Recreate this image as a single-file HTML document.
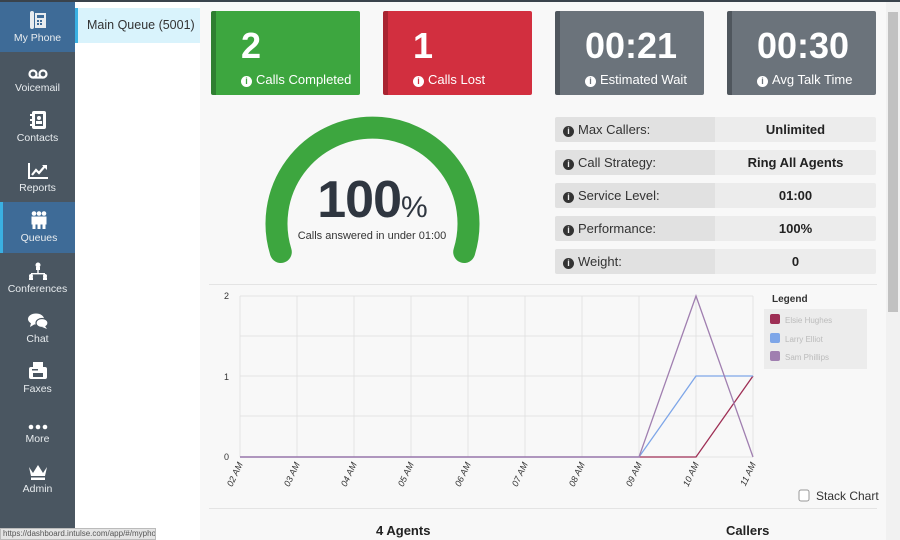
<!DOCTYPE html>
<html><head><style>
*{margin:0;padding:0;box-sizing:border-box}
body{width:900px;height:540px;overflow:hidden;font-family:"Liberation Sans",sans-serif;background:#f8f8f8;position:relative}
.sb{position:absolute;left:0;top:0;width:75px;height:540px;background:#4a5661;border-top:2px solid #3a434c}
.it{position:absolute;left:0;width:75px;height:50px;color:#e8ecef;font-size:10.5px;text-align:center}
.it .ic{height:30px;display:flex;align-items:flex-end;justify-content:center;padding-bottom:3px}
.act{background:#3e6b97}
.ql{position:absolute;left:75px;top:2px;width:125px;height:538px;background:#fff}
.qi{position:absolute;left:0;top:6px;width:125px;height:35px;background:#d9f3fc;border-left:3px solid #3ab0e2;font-size:12.5px;color:#333;padding:10px 0 0 9px;white-space:nowrap}
.card{position:absolute;top:11px;width:149px;height:84px;color:#fff;border-radius:2px}
.card b{position:absolute;left:25px;top:14px;font-size:36px}
.card span{position:absolute;left:25px;top:61px;font-size:13px}
.card i{font-style:normal;display:inline-block;width:11px;height:11px;border-radius:50%;background:#fff;color:inherit;font-size:9px;text-align:center;line-height:11px;font-weight:bold;margin-right:4px;vertical-align:0}
.row{position:absolute;left:555px;width:321px;height:25px;font-size:13px;border-radius:2px;overflow:hidden}
.row .l{position:absolute;left:0;top:0;width:160px;height:25px;background:#e1e1e1;padding:5px 0 0 8px;color:#333}
.row .v{position:absolute;left:160px;top:0;width:161px;height:25px;background:#ececec;text-align:center;padding-top:5px;font-weight:bold;color:#222}
.row i{font-style:normal;display:inline-block;width:11px;height:11px;border-radius:50%;background:#333;color:#eee;font-size:9px;text-align:center;line-height:11px;font-weight:bold;margin-right:4px}
</style></head><body>
<div class="sb">
<div class="it act" style="top:0;height:50px"><div class="ic"><svg width="16" height="18" viewBox="0 0 16 18"><rect x="0" y="0" width="4" height="18" rx="2" fill="#e8ecef"/><rect x="5" y="2" width="11" height="15" fill="#e8ecef"/><g fill="#3e6b97"><rect x="7" y="4" width="7" height="3"/><rect x="7" y="9" width="2" height="2"/><rect x="10" y="9" width="2" height="2"/><rect x="7" y="12" width="2" height="2"/><rect x="10" y="12" width="2" height="2"/></g></svg></div>My Phone</div>
<div class="it" style="top:50px"><div class="ic"><svg width="20" height="10"><circle cx="5" cy="5" r="3.5" fill="none" stroke="#fff" stroke-width="2.2"/><circle cx="15" cy="5" r="3.5" fill="none" stroke="#fff" stroke-width="2.2"/><line x1="5" y1="8.5" x2="15" y2="8.5" stroke="#fff" stroke-width="2.2"/></svg></div>Voicemail</div>
<div class="it" style="top:100px"><div class="ic"><svg width="16" height="18"><rect x="2" y="0" width="14" height="18" rx="2" fill="#fff"/><rect x="5" y="3" width="8" height="12" fill="#4a5661"/><circle cx="9" cy="7" r="2" fill="#fff"/><rect x="6" y="10" width="6" height="3" fill="#fff"/><g fill="#fff"><rect x="0" y="3" width="3" height="2"/><rect x="0" y="8" width="3" height="2"/><rect x="0" y="13" width="3" height="2"/></g></svg></div>Contacts</div>
<div class="it" style="top:150px"><div class="ic"><svg width="20" height="16"><path d="M1 0V15H20" fill="none" stroke="#fff" stroke-width="2"/><path d="M4 12L8 7L11 10L17 3" fill="none" stroke="#fff" stroke-width="2.2"/><path d="M14 2H19V7Z" fill="#fff"/></svg></div>Reports</div>
<div class="it act" style="top:200px;height:51px;border-left:3px solid #3ab0e2"><div class="ic"><svg width="18" height="18"><g fill="#fff"><circle cx="4" cy="2.5" r="2.3"/><circle cx="9" cy="2.5" r="2.3"/><circle cx="14" cy="2.5" r="2.3"/><rect x="1.5" y="5.5" width="5" height="8"/><rect x="6.5" y="5.5" width="5" height="8"/><rect x="11.5" y="5.5" width="5" height="8"/><rect x="2.5" y="13" width="3" height="5"/><rect x="7.5" y="13" width="3" height="5"/><rect x="12.5" y="13" width="3" height="5"/></g></svg></div>Queues</div>
<div class="it" style="top:251px"><div class="ic"><svg width="20" height="18"><g fill="#fff"><circle cx="10" cy="3" r="2.5"/><rect x="8" y="5" width="4" height="3"/><rect x="9.3" y="8" width="1.4" height="4"/><rect x="3" y="11" width="14" height="1.4"/><circle cx="3" cy="14" r="2"/><circle cx="17" cy="14" r="2"/><rect x="1" y="15.5" width="4" height="2.5"/><rect x="15" y="15.5" width="4" height="2.5"/></g></svg></div>Conferences</div>
<div class="it" style="top:301px"><div class="ic"><svg width="20" height="17"><ellipse cx="8" cy="6" rx="8" ry="5.5" fill="#fff"/><path d="M3 10L2 14L7 11Z" fill="#fff"/><ellipse cx="14" cy="10" rx="6" ry="4.5" fill="#fff" stroke="#4a5661" stroke-width="1.2"/><path d="M17 13L19 16L14 14Z" fill="#fff"/></svg></div>Chat</div>
<div class="it" style="top:351px"><div class="ic"><svg width="20" height="18"><rect x="5" y="0" width="10" height="5" fill="#fff"/><rect x="1" y="5" width="18" height="12" rx="2" fill="#fff"/><rect x="5" y="11" width="10" height="4" fill="#4a5661"/><rect x="4" y="7" width="6" height="1.5" fill="#4a5661"/></svg></div>Faxes</div>
<div class="it" style="top:401px"><div class="ic"><svg width="20" height="6"><circle cx="3" cy="3" r="2.3" fill="#fff"/><circle cx="10" cy="3" r="2.3" fill="#fff"/><circle cx="17" cy="3" r="2.3" fill="#fff"/></svg></div>More</div>
<div class="it" style="top:451px"><div class="ic"><svg width="20" height="16"><path d="M1 3L5 9L10 1L15 9L19 3L17 12H3Z" fill="#fff"/><rect x="3" y="13.5" width="14" height="2.5" fill="#fff"/></svg></div>Admin</div>
</div>
<div class="ql"><div class="qi">Main Queue (5001)</div></div>
<div style="position:absolute;left:0;top:528px;width:156px;height:12px;background:#e4e4e4;border:1px solid #bbb;font-size:8px;color:#555;padding-left:2px;line-height:10px;white-space:nowrap;overflow:hidden">https://dashboard.intulse.com/app/#/myphone</div>
<div style="position:absolute;left:0;top:0;width:900px;height:2px;background:#3a434c"></div>

<div class="card" style="left:211px;background:#3da63f;border-left:5px solid #2f7f31"><b>2</b><span><i style="color:#3da63f">i</i>Calls Completed</span></div>
<div class="card" style="left:383px;background:#d22f3f;border-left:5px solid #a92431"><b>1</b><span><i style="color:#d22f3f">i</i>Calls Lost</span></div>
<div class="card" style="left:555px;background:#6b737b;border-left:5px solid #4f565d"><b>00:21</b><span><i style="color:#6b737b">i</i>Estimated Wait</span></div>
<div class="card" style="left:727px;background:#6b737b;border-left:5px solid #4f565d"><b>00:30</b><span><i style="color:#6b737b">i</i>Avg Talk Time</span></div>

<svg style="position:absolute;left:260px;top:105px" width="225" height="165"><path d="M20.8 147 A96 96 0 1 1 204.2 147" fill="none" stroke="#3da63f" stroke-width="22" stroke-linecap="round"/></svg>
<div style="position:absolute;left:280px;top:170px;width:185px;text-align:center;color:#2f3640"><span style="font-size:52px;font-weight:bold;letter-spacing:-1px">100</span><span style="font-size:30px">%</span></div>
<div style="position:absolute;left:272px;top:230px;width:200px;text-align:center;font-size:11px;color:#333">Calls answered in under 01:00</div>

<div class="row" style="top:117px"><div class="l"><i>i</i>Max Callers:</div><div class="v">Unlimited</div></div>
<div class="row" style="top:150px"><div class="l"><i>i</i>Call Strategy:</div><div class="v">Ring All Agents</div></div>
<div class="row" style="top:183px"><div class="l"><i>i</i>Service Level:</div><div class="v">01:00</div></div>
<div class="row" style="top:216px"><div class="l"><i>i</i>Performance:</div><div class="v">100%</div></div>
<div class="row" style="top:249px"><div class="l"><i>i</i>Weight:</div><div class="v">0</div></div>

<div style="position:absolute;left:209px;top:284px;width:668px;height:1px;background:#e4e4e4"></div>
<div style="position:absolute;left:209px;top:508px;width:668px;height:1px;background:#e4e4e4"></div>
<svg style="position:absolute;left:200px;top:280px" width="686" height="228" font-family="Liberation Sans" font-size="9" fill="#333">
<g stroke="#e3e3e3" stroke-width="1">
<line x1="40" y1="16" x2="553" y2="16"/><line x1="40" y1="56" x2="553" y2="56"/><line x1="40" y1="96" x2="553" y2="96"/><line x1="40" y1="136" x2="553" y2="136"/><line x1="40" y1="177" x2="553" y2="177"/>
<line x1="40" y1="16" x2="40" y2="177"/><line x1="97" y1="16" x2="97" y2="177"/><line x1="154" y1="16" x2="154" y2="177"/><line x1="211" y1="16" x2="211" y2="177"/><line x1="268" y1="16" x2="268" y2="177"/><line x1="325" y1="16" x2="325" y2="177"/><line x1="382" y1="16" x2="382" y2="177"/><line x1="439" y1="16" x2="439" y2="177"/><line x1="496" y1="16" x2="496" y2="177"/><line x1="553" y1="16" x2="553" y2="177"/>
</g>
<text x="24" y="19">2</text><text x="24" y="100">1</text><text x="24" y="180">0</text>
<polyline points="40,177 439,177 496,177 553,96" fill="none" stroke="#9e2f55" stroke-width="1.3"/>
<polyline points="40,177 439,177 496,96 553,96" fill="none" stroke="#7ea6e8" stroke-width="1.3"/>
<polyline points="40,177 439,177 496,16 553,177" fill="none" stroke="#a07fb0" stroke-width="1.3"/>
<g font-style="italic"><text transform="translate(43,184) rotate(-65)" text-anchor="end">02 AM</text><text transform="translate(100,184) rotate(-65)" text-anchor="end">03 AM</text><text transform="translate(157,184) rotate(-65)" text-anchor="end">04 AM</text><text transform="translate(214,184) rotate(-65)" text-anchor="end">05 AM</text><text transform="translate(271,184) rotate(-65)" text-anchor="end">06 AM</text><text transform="translate(328,184) rotate(-65)" text-anchor="end">07 AM</text><text transform="translate(385,184) rotate(-65)" text-anchor="end">08 AM</text><text transform="translate(442,184) rotate(-65)" text-anchor="end">09 AM</text><text transform="translate(499,184) rotate(-65)" text-anchor="end">10 AM</text><text transform="translate(556,184) rotate(-65)" text-anchor="end">11 AM</text></g>
<text x="572" y="22" font-weight="bold" font-size="10">Legend</text>
<rect x="564" y="29" width="103" height="60" fill="#ececec"/>
<rect x="570" y="34" width="10" height="10" rx="2" fill="#9e2f55"/><text x="585" y="43" fill="#bbb" font-size="8">Elsie Hughes</text>
<rect x="570" y="53" width="10" height="10" rx="2" fill="#7ea6e8"/><text x="585" y="62" fill="#bbb" font-size="8">Larry Elliot</text>
<rect x="570" y="71" width="10" height="10" rx="2" fill="#a07fb0"/><text x="585" y="80" fill="#bbb" font-size="8">Sam Phillips</text>
<rect x="599" y="210" width="10" height="11" rx="2" fill="#fff" stroke="#999"/><text x="616" y="220" font-size="12">Stack Chart</text>
</svg>
<div style="position:absolute;left:376px;top:523px;font-size:13px;font-weight:bold;color:#222">4 Agents</div>
<div style="position:absolute;left:726px;top:523px;font-size:13px;font-weight:bold;color:#222">Callers</div>
<div style="position:absolute;left:886px;top:2px;width:14px;height:538px;background:#f1f1f1"></div>
<div style="position:absolute;left:888px;top:12px;width:10px;height:300px;background:#c1c1c1"></div>
</body></html>
